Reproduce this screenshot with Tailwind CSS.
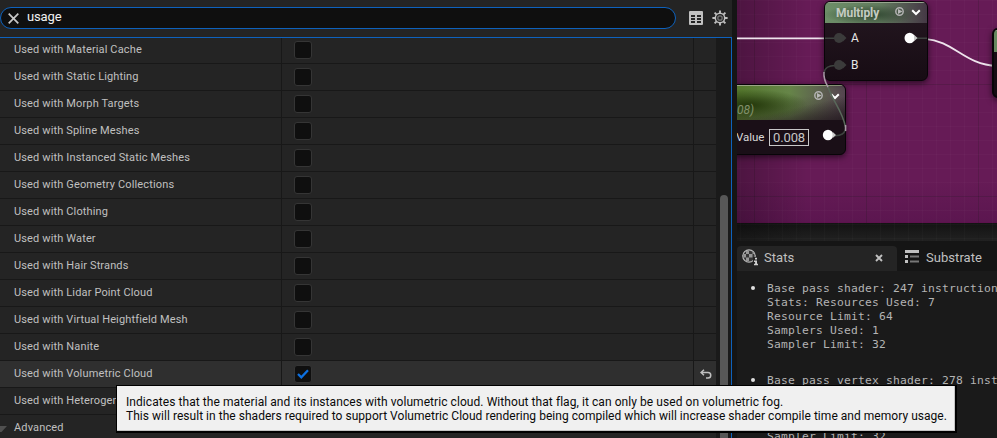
<!DOCTYPE html>
<html lang="en">
<head>
<meta charset="utf-8">
<title>Material Editor</title>
<script src="https://cdn.jsdelivr.net/npm/@tailwindcss/browser@4"></script>
</head>
<body class="w-[997px] h-[438px] overflow-hidden bg-[#151515] font-['Roboto',sans-serif] text-[#c0c0c0]">
<div class="relative flex w-[997px] h-[438px] overflow-hidden">
  <!-- Details panel -->
  <section class="flex flex-col w-[732px] shrink-0 bg-[#242424]">
    <header class="flex items-start h-[37px] shrink-0 pt-[7px]">
      <div class="flex items-center w-[676px] h-[22px] rounded-full border border-[#0e62bd] bg-[#0f0f0f] pl-[7px]">
        <svg class="w-[11px] h-[11px]" viewBox="0 0 11 11" fill="none" stroke="#c8c8c8" stroke-width="1.700"><path d="M.7.7l9.600 9.600M10.300.7L.7 10.300"/></svg>
        <span class="ml-[8px] -mt-[2px] text-[13px] leading-4 tracking-[-0.150px] text-[#f2f2f2]">usage</span>
      </div>
      <svg class="ml-[13px] mt-[4px] w-[14px] h-[14px]" viewBox="0 0 14 14"><path fill="#c0c0c0" fill-rule="evenodd" d="M1 0h12a1 1 0 011 1v12a1 1 0 01-1 1H1a1 1 0 01-1-1V1a1 1 0 011-1zM2 4v2h4V4zM8 4v2h4V4zM2 7v2h4V7zM8 7v2h4V7zM2 10v2h4v-2zM8 10v2h4v-2z"/></svg>
      <svg class="ml-[9px] mt-[3px] w-[16px] h-[16px]" viewBox="0 0 16 16" fill="none" stroke="#c0c0c0"><circle cx="8" cy="8" r="4.700" stroke-width="1.500"/><circle cx="8" cy="8" r="2.200" stroke-width="1.300" stroke="#777"/><path stroke-width="1.900" d="M8 .4v2.800M8 12.800v2.800M.4 8h2.800M12.800 8h2.800M2.600 2.600l2 2M11.400 11.400l2 2M2.600 13.400l2-2M11.400 4.600l2-2"/></svg>
    </header>
    <div class="flex flex-1 min-h-0 border-t border-r border-[#0e62bd] bg-[#1a1a1a]">
      <div id="rows" class="w-[716px] shrink-0 overflow-hidden text-[11px] tracking-[0.140px]"></div>
      <div class="flex-1 pt-[157px] pl-[4px]"><div class="w-[8px] h-[260px] rounded-t-full bg-[#575757]"></div></div>
    </div>
  </section>

  <section class="flex flex-col flex-1 min-w-0 pl-[5px]">
    <!-- Graph canvas -->
    <div class="relative h-[241px] shrink-0 overflow-hidden bg-[#1d1d1d]">
      <div class="absolute inset-x-0 top-0 h-[223px] bg-[#661b56] border-b border-[#5c124d]"></div>
      <div class="absolute inset-x-0 top-[223px] h-[18px] bg-linear-to-b from-[#131313] to-[#212121]"></div>
      <div class="absolute inset-x-0 top-[180px] h-[42px] bg-linear-to-b from-transparent to-[#4c0f46]/40"></div>
      <svg class="absolute inset-0 w-[260px] h-[241px]" viewBox="0 0 260 241">
        <defs>
          <pattern id="minor" x="3" width="14" height="14" patternUnits="userSpaceOnUse"><path d="M0 .5h14M.5 0v14" stroke="#fff" stroke-opacity=".018"/></pattern>
        </defs>
        <rect width="260" height="241" fill="url(#minor)"/>
        <path d="M17.500 0v241M129.500 0v241M241.500 0v241M0 84.500h260M0 196.500h260" stroke="#000" stroke-opacity=".16"/>
      </svg>
      <div class="absolute inset-y-0 left-0 w-[70px] bg-linear-to-r from-black/25 to-transparent"></div>

      <svg class="absolute inset-0 w-[260px] h-[241px]" viewBox="0 0 260 241" fill="none" stroke="#efe4ed" stroke-width="1.800"><path d="M0 38.300h90M188 38.800c29 2 39 26 72 27.200"/></svg>

      <!-- Parameter node -->
      <div class="absolute -left-[40px] top-[84px] w-[149px] h-[71px] rounded-[6px] border border-[#080508] bg-[#1a0f17] overflow-hidden shadow-[0_2px_6px_rgba(0,0,0,0.6)]">
        <div class="relative h-[35px] border-t border-[#9aa585] bg-linear-to-r from-[#56792f] from-30% via-[#668548] via-62% to-[#54444f]">
          <div class="absolute inset-0 bg-linear-to-b from-transparent from-30% to-[#281d21]/40"></div>
          <div class="absolute inset-0 bg-linear-to-br from-transparent from-65% to-[#241a20]/80"></div>
          <div class="absolute inset-0 bg-radial-[ellipse_60px_16px_at_50px_19px] from-[#263b0d] from-5% to-transparent to-100%"></div>
          <span class="absolute left-[39px] top-[16px] text-[12px] leading-4 italic text-[#81906b]">08)</span>
          <svg class="absolute left-[116px] top-[5px] w-[9px] h-[9px]" viewBox="0 0 9 9"><circle cx="4.500" cy="4.500" r="3.700" fill="none" stroke="#b0b0b0" stroke-width="1.500"/><path d="M3 2v5l4.500-2.500z" fill="#b8b8b8"/></svg>
          <svg class="absolute left-[132px] top-[7px] w-[10px] h-[7px]" viewBox="0 0 10 7" fill="none" stroke="#fff" stroke-width="2"><path d="M1.200 1.200L5 5l3.800-3.800"/></svg>
        </div>
        <div class="flex items-center h-[34px] pl-[38px] pt-[1px]">
          <span class="text-[11.500px] tracking-[-0.050px] text-[#d8d8d8] w-[33px] whitespace-nowrap">Value</span>
          <span class="flex items-center justify-center w-[40px] h-[17px] border border-[#c8c8c8] text-[13px] leading-[15px] tracking-[-0.100px] text-[#c6c6c6]">0.008</span>
        </div>
      </div>

      <!-- Multiply node -->
      <div class="absolute left-[87px] top-px w-[104px] h-[80px] rounded-[6px] border border-[#080508] bg-linear-to-b from-[#251821] to-[#170c14] overflow-hidden shadow-[0_2px_6px_rgba(0,0,0,0.6)]">
        <div class="relative flex items-center h-[21px] border-t border-[#97a88f] bg-linear-to-r from-[#6d8f68] via-[#617a5d] via-55% to-[#453845]">
          <div class="absolute inset-0 bg-radial-[ellipse_at_45%_58%] from-[#2f4530]/80 from-10% to-transparent to-60%"></div>
          <span class="relative ml-[11px] -mt-[1px] text-[12px] font-bold tracking-[-0.050px] text-[#c4cbc2]">Multiply</span>
          <svg class="absolute left-[70px] top-[4px] w-[9px] h-[9px]" viewBox="0 0 9 9"><circle cx="4.500" cy="4.500" r="3.700" fill="none" stroke="#b0b0b0" stroke-width="1.500"/><path d="M3 2v5l4.500-2.500z" fill="#b8b8b8"/></svg>
          <svg class="absolute left-[86px] top-[6px] w-[10px] h-[7px]" viewBox="0 0 10 7" fill="none" stroke="#fff" stroke-width="2"><path d="M1.200 1.200L5 5l3.800-3.800"/></svg>
        </div>
        <div class="flex flex-col pt-[2px] pl-[26px] text-[12px] leading-[27px] text-[#e6e6e6]"><span class="h-[27px]">A</span><span class="h-[27px]">B</span></div>
      </div>

      <!-- Clipped neighbour node -->
      <div class="absolute left-[255px] top-[28px] w-[40px] h-[70px] rounded-[6px] border-2 border-[#080508] bg-[#170c14] overflow-hidden shadow-[0_2px_6px_rgba(0,0,0,0.6)]">
        <div class="h-[22px] border-t border-[#97a88f] bg-[#66885f]"></div>
      </div>

      <!-- Pins and the wire that passes over the nodes -->
      <svg class="absolute inset-0 w-[260px] h-[241px]" viewBox="0 0 260 241" fill="none">
        <g stroke="#3d433f" stroke-width="1.500"><path d="M88 38.300h10M178 38.300h12M98 65.500c-6 0-10 2-11 7M95 135.500c9 1 14-2 13.500-9"/><path stroke="#59685a" d="M91 87c5 15 14 23 17.500 40"/></g>
        <path d="M87 72c-.5 5 1 10 4 15M108.600 125v6" stroke="#a898a5" stroke-width="1.500"/>
        <g fill="#3b3b3b"><circle cx="102" cy="38" r="5"/><path d="M106 34.500l3.500 3.500-3.500 3.500z"/><circle cx="102" cy="65" r="5"/><path d="M106 61.500l3.500 3.500-3.500 3.500z"/></g>
        <g fill="#fff"><circle cx="172.700" cy="38" r="5.200"/><circle cx="91" cy="135" r="5.200"/></g>
        <g fill="#c9c9c9"><path d="M177 34.800l3.500 3.200-3.500 3.200z"/><path d="M95.500 131.800l3.500 3.200-3.500 3.200z"/></g>
      </svg>
    </div>

    <!-- Tabs -->
    <nav class="flex h-[30px] shrink-0 pt-[5px] bg-[#151515] text-[13px] tracking-[0.050px]">
      <div class="flex items-center w-[160px] h-[25px] rounded-t-[4px] bg-[#242424] pl-[5px]">
        <svg class="w-[17px] h-[17px] -mt-[2px] shrink-0" viewBox="0 0 17 17"><circle cx="7" cy="7" r="6.200" fill="#353535" stroke="#b8b8b8" stroke-width="1.200"/><path fill="#969696" d="M4 1.800h3V5H4zM7 5h3.500v3.500H7zM1.500 5H4v3.500H1.500zM4 8.500h3V12H4zM10.500 2.500L12.500 5h-2z"/><path fill="#242424" d="M11 8h6v9h-6z"/><path fill="#d0d0d0" d="M13 8.800h2v1.800h-2zM12 11.600h3v3.200h1v1.500h-4v-1.500h1.100v-1.800H12z"/></svg>
        <span class="ml-[5px] -mt-[2px] flex-1">Stats</span>
        <svg class="mr-[14px] -mt-[2px] w-[8px] h-[8px]" viewBox="0 0 8 8" stroke="#c0c0c0" stroke-width="1.900"><path d="M1 1l6 6M7 1L1 7"/></svg>
      </div>
      <div class="flex items-center h-[23px] pl-[8px]">
        <svg class="w-[14px] h-[13px] -mt-[2px]" viewBox="0 0 14 13"><path fill="#c0c0c0" d="M0 0h14v3H0zM0 5h3v3H0zM0 10h3v3H0z"/><path fill="#777" d="M5 5.500h9v2H5zM5 10.500h9v2H5z"/></svg>
        <span class="ml-[7px]">Substrate</span>
      </div>
    </nav>
    <!-- Stats output -->
    <div class="flex-1 min-h-0 overflow-hidden bg-[#1a1a1a] pt-[11px] pl-[14px] font-['DejaVu_Sans_Mono',monospace] text-[11.300px] tracking-[0.197px] leading-[14px] text-[#b4b4b4]">
      <div class="flex h-[92px]"><i class="w-[4px] h-[4px] mt-[4px] mr-[12px] shrink-0 rounded-full bg-[#e0e0e0]"></i><pre class="font-['DejaVu_Sans_Mono',monospace]">Base pass shader: 247 instructions
Stats: Resources Used: 7
Resource Limit: 64
Samplers Used: 1
Sampler Limit: 32</pre></div>
      <div class="flex h-[92px]"><i class="w-[4px] h-[4px] mt-[4px] mr-[12px] shrink-0 rounded-full bg-[#e0e0e0]"></i><pre class="font-['DejaVu_Sans_Mono',monospace]">Base pass vertex shader: 278 instructions
Stats: Resources Used: 7
Resource Limit: 64
Samplers Used: 1
Sampler Limit: 32</pre></div>
    </div>
  </section>

  <!-- Tooltip -->
  <div class="absolute left-[116px] top-[385px] w-[841px] h-[48px] bg-black pt-px pl-px">
    <div class="w-[838px] h-[45px] bg-[#f0f0f0] border-b border-r border-[#c4c4c4] pt-[9px] pl-[9px] text-[12px] leading-[14px] text-[#0a0a0a] whitespace-nowrap">
      <p class="tracking-[0.065px]">Indicates that the material and its instances with volumetric cloud. Without that flag, it can only be used on volumetric fog.</p>
      <p class="tracking-[0.033px]">This will result in the shaders required to support Volumetric Cloud rendering being compiled which will increase shader compile time and memory usage.</p>
    </div>
  </div>
</div>
<script>
const names = ["Material Cache","Static Lighting","Morph Targets","Spline Meshes","Instanced Static Meshes","Geometry Collections","Clothing","Water","Hair Strands","Lidar Point Cloud","Virtual Heightfield Mesh","Nanite","Volumetric Cloud","Heterogeneous Volumes"];
const undo = '<svg class="w-[12px] h-[10px]" viewBox="0 0 12 10" fill="none" stroke="#c0c0c0" stroke-width="1.500"><path d="M4 .8L1 3.500l3 2.700M1 3.500h7a2.700 2.700 0 010 5.500H6"/></svg>';
const tick = '<svg class="w-[12px] h-[10px]" viewBox="0 0 12 10" fill="none" stroke="#0d70e0" stroke-width="2.300"><path d="M1 5l3.300 3.300L11 1.300"/></svg>';
document.getElementById("rows").innerHTML = names.map((n, i) => {
  const on = n === "Volumetric Cloud";
  return `<div class="flex ${i ? "h-[27px]" : "h-[26px]"} border-b border-[#181818] ${on ? "bg-[#2f2f2f]" : "bg-[#242424]"}">
    <div class="flex items-end w-[282px] shrink-0 pl-[14px] pb-[6px] border-r border-[#181818] whitespace-nowrap overflow-hidden"><span class="leading-[15px]">Used with ${n}</span></div>
    <div class="flex items-end w-[412px] shrink-0 pl-[12px] pb-[4px] border-r border-[#181818]"><span class="flex items-center justify-center w-[18px] h-[18px] rounded-[3px] border border-[#353535] bg-[#0f0f0f]">${on ? tick : ""}</span></div>
    <div class="flex items-center pl-[6px]">${on ? undo : ""}</div>
  </div>`;
}).join("") + `<div class="flex items-end h-[27px] pb-[7px] bg-[#242424]"><svg class="w-[14px] h-[7px] mb-[2px]" viewBox="0 0 14 7"><path d="M0 0h7L1.500 6H0z" fill="#505050"/></svg><span class="leading-[15px]">Advanced</span></div>`;
</script>
</body>
</html>
